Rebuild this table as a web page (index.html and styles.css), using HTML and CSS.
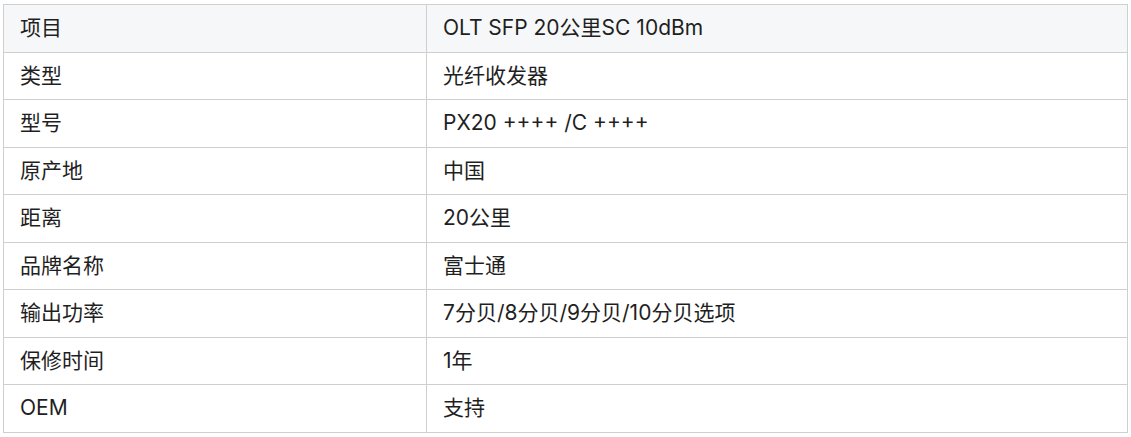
FILE: index.html
```html
<!DOCTYPE html>
<html lang="zh">
<head>
<meta charset="utf-8">
<link rel="stylesheet" href="styles.css">
</head>
<body>
<table class="spec">
  <colgroup><col class="c1"><col class="c2"></colgroup>
  <tr class="head"><td>项目</td><td>OLT SFP 20公里SC 10dBm</td></tr>
  <tr><td>类型</td><td>光纤收发器</td></tr>
  <tr><td>型号</td><td>PX20 ++++ /C ++++</td></tr>
  <tr><td>原产地</td><td>中国</td></tr>
  <tr><td>距离</td><td>20公里</td></tr>
  <tr><td>品牌名称</td><td>富士通</td></tr>
  <tr><td>输出功率</td><td>7分贝/8分贝/9分贝/10分贝选项</td></tr>
  <tr><td>保修时间</td><td>1年</td></tr>
  <tr><td>OEM</td><td>支持</td></tr>
</table>
</body>
</html>
```
FILE: styles.css
```css
html, body { background: #fff; }
body {
  margin: 4px 3px;
  font-family: Inter, "Noto Sans CJK SC", sans-serif;
  font-size: 21px;
  color: #1f1f1f;
}
.spec {
  border-collapse: collapse;
  table-layout: fixed;
  width: 1125px;
}
.spec .c1 { width: 423px; }
.spec td {
  border: 1px solid #cfcfcf;
  padding: 10px 16px;
  line-height: 26.5px;
  white-space: nowrap;
}
.spec .head td { background: #f6f7f9; }
```
